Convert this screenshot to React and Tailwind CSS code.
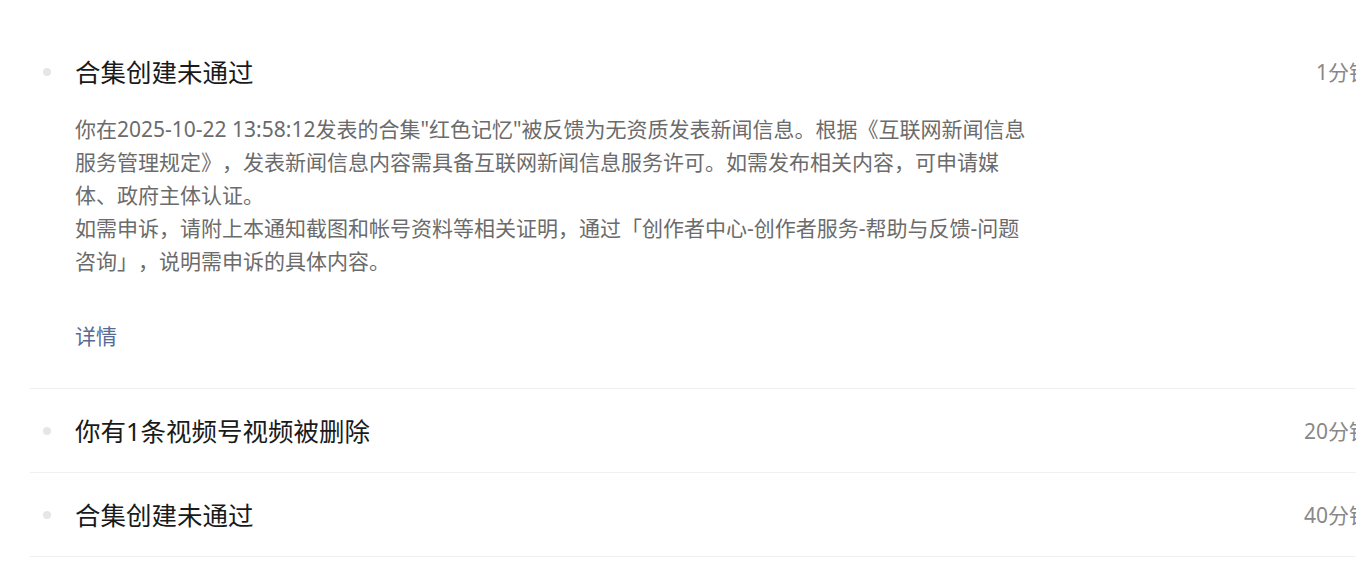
const notices = [
  {
    id: 1,
    title: "合集创建未通过",
    time: "1分钟前",
    paragraphs: [
      "你在2025-10-22 13:58:12发表的合集\"红色记忆\"被反馈为无资质发表新闻信息。根据《互联网新闻信息服务管理规定》，发表新闻信息内容需具备互联网新闻信息服务许可。如需发布相关内容，可申请媒体、政府主体认证。",
      "如需申诉，请附上本通知截图和帐号资料等相关证明，通过「创作者中心-创作者服务-帮助与反馈-问题咨询」，说明需申诉的具体内容。",
    ],
    link: "详情",
  },
  { id: 2, title: "你有1条视频号视频被删除", time: "20分钟前" },
  { id: 3, title: "合集创建未通过", time: "40分钟前" },
];

function NoticeRow({ notice }) {
  const expanded = !!notice.paragraphs;
  return (
    <div
      className={`flex items-start border-b border-[#f0f0f0] pt-[25px] ${
        expanded ? "pb-[35px]" : "pb-[24px]"
      }`}
    >
      <div className="flex h-[34px] w-[45px] shrink-0 items-center pl-[13px]">
        <span className="h-[8px] w-[8px] rounded-full bg-[#e6e6e6]" />
      </div>
      <div className="min-w-0 flex-1">
        <h3 className="text-[25.5px] leading-[34px] font-normal text-[#1a1a1a]">
          {notice.title}
        </h3>
        {expanded && (
          <>
            <div className="mt-[24px] w-[962px] text-[21px] leading-[33px] text-[#6b6b6b]">
              {notice.paragraphs.map((p, i) => (
                <p key={i}>{p}</p>
              ))}
            </div>
            <a className="mt-[42px] block text-[21px] leading-[33px] text-[#576b95]">
              {notice.link}
            </a>
          </>
        )}
      </div>
      <span className="shrink-0 text-[21px] leading-[34px] text-[#888888]">
        {notice.time}
      </span>
    </div>
  );
}

export default function App() {
  return (
    <div
      className="h-[564px] w-full overflow-hidden bg-white [text-spacing-trim:space-all]"
      style={{ fontFamily: '"Noto Sans", "Noto Sans CJK SC", sans-serif' }}
    >
      <div className="w-[1361px] pl-[30px] pt-[30px] box-content">
        {notices.map((n) => (
          <NoticeRow key={n.id} notice={n} />
        ))}
      </div>
    </div>
  );
}
